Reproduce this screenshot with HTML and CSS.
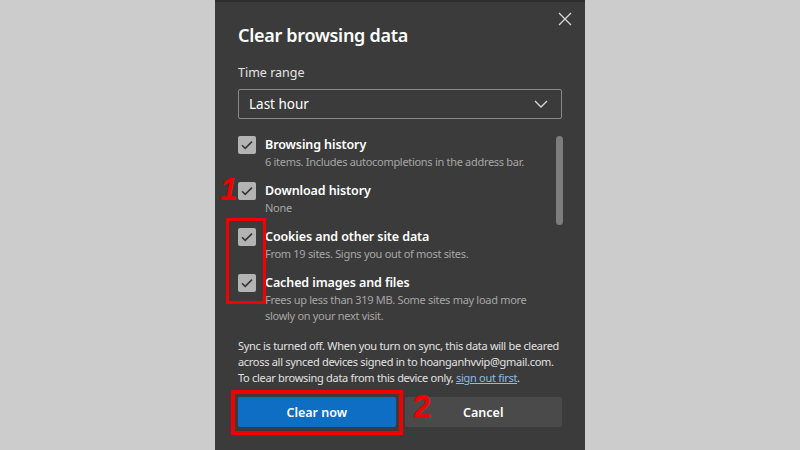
FILE: index.html
```html
<!DOCTYPE html>
<html>
<head>
<meta charset="utf-8">
<link rel="stylesheet" href="styles.css">
</head>
<body>
<div class="page">
  <div class="dialog">
    <button class="close" aria-label="Close">
      <svg width="14" height="14" viewBox="0 0 14 14"><path d="M1 1L13 13M13 1L1 13" stroke="#d8d8d8" stroke-width="1.3" fill="none"/></svg>
    </button>
    <h1 class="title">Clear browsing data</h1>
    <div class="label">Time range</div>
    <div class="select">
      <span>Last hour</span>
      <svg width="14" height="8" viewBox="0 0 14 8"><path d="M1 1L7 7L13 1" stroke="#d8d8d8" stroke-width="1.3" fill="none"/></svg>
    </div>
    <div class="listwrap">
      <div class="list">
        <div class="item">
          <span class="cb"><svg width="12" height="10" viewBox="0 0 12 10"><path d="M1 5.2L4.2 8.4L11 1.6" stroke="#333" stroke-width="1.5" fill="none"/></svg></span>
          <div class="txt"><div class="it">Browsing history</div><div class="sub">6 items. Includes autocompletions in the address bar.</div></div>
        </div>
        <div class="item">
          <span class="cb"><svg width="12" height="10" viewBox="0 0 12 10"><path d="M1 5.2L4.2 8.4L11 1.6" stroke="#333" stroke-width="1.5" fill="none"/></svg></span>
          <div class="txt"><div class="it">Download history</div><div class="sub">None</div></div>
        </div>
        <div class="item">
          <span class="cb"><svg width="12" height="10" viewBox="0 0 12 10"><path d="M1 5.2L4.2 8.4L11 1.6" stroke="#333" stroke-width="1.5" fill="none"/></svg></span>
          <div class="txt"><div class="it">Cookies and other site data</div><div class="sub">From 19 sites. Signs you out of most sites.</div></div>
        </div>
        <div class="item">
          <span class="cb"><svg width="12" height="10" viewBox="0 0 12 10"><path d="M1 5.2L4.2 8.4L11 1.6" stroke="#333" stroke-width="1.5" fill="none"/></svg></span>
          <div class="txt"><div class="it">Cached images and files</div><div class="sub">Frees up less than 319 MB. Some sites may load more<br>slowly on your next visit.</div></div>
        </div>
      </div>
      <div class="track"><div class="thumb"></div></div>
    </div>
    <p class="sync">Sync is turned off. When you turn on sync, this data will be cleared<br>across all synced devices signed in to hoanganhvvip@gmail.com.<br>To clear browsing data from this device only, <a class="link">sign out first</a>.</p>
    <div class="buttons">
      <button class="btn primary">Clear now</button>
      <button class="btn secondary">Cancel</button>
    </div>
    <div class="mark box1"></div>
    <div class="mark box2"></div>
    <div class="num n1">1</div>
    <div class="num n2">2</div>
  </div>
</div>
</body>
</html>
```
FILE: styles.css
```css
* { box-sizing: border-box; }
html, body { margin: 0; padding: 0; }
body {
  background: #cccccc;
  font-family: "Noto Sans", "Open Sans", sans-serif;
  width: 800px;
  height: 450px;
  overflow: hidden;
}
.page {
  width: 800px;
  height: 450px;
  padding-left: 215px;
}
.dialog {
  position: relative;
  width: 370px;
  height: 450px;
  background: #3b3b3b;
  border-top: 2px solid #2e2e2e;
  padding: 20px 23px 0 23px;
  color: #fff;
}
.close {
  position: absolute;
  top: 10px;
  right: 13px;
  width: 14px;
  height: 14px;
  padding: 0;
  border: 0;
  background: none;
  display: flex;
}
.title {
  margin: 0;
  font-size: 18px;
  font-weight: 600;
  line-height: 26px;
  letter-spacing: -0.3px;
}
.label {
  margin-top: 17px;
  font-size: 12.5px;
  line-height: 16px;
  color: #e4e4e4;
}
.select {
  margin-top: 8px;
  height: 30px;
  border: 1px solid #8a8a8a;
  border-radius: 2px;
  display: flex;
  align-items: center;
  justify-content: space-between;
  padding: 0 13px 0 10px;
  font-size: 13.5px;
}
.listwrap {
  margin-top: 17px;
  display: flex;
  justify-content: space-between;
}
.list { display: flex; flex-direction: column; gap: 12px; }
.item { display: flex; gap: 9px; align-items: flex-start; }
.cb {
  width: 18px;
  height: 18px;
  background: #b3b3b3;
  border-radius: 2px;
  display: flex;
  align-items: center;
  justify-content: center;
  flex: none;
}
.it {
  font-size: 12.5px;
  font-weight: 600;
  line-height: 18px;
  letter-spacing: -0.1px;
}
.sub {
  font-size: 11px;
  line-height: 16px;
  letter-spacing: -0.3px;
  color: #a6a6a6;
}
.track {
  width: 7px;
  margin-right: -1px;
}
.thumb {
  width: 7px;
  height: 89px;
  border-radius: 4px;
  background: #7d7d7d;
}
.sync {
  margin: 14px 0 0 0;
  font-size: 11px;
  line-height: 16px;
  letter-spacing: -0.3px;
  white-space: nowrap;
  color: #e2e2e2;
}
.link { color: #8fbbe6; text-decoration: underline; }
.buttons {
  margin-top: 11px;
  display: flex;
  gap: 9px;
}
.btn {
  flex: 1;
  height: 30px;
  border: 0;
  border-radius: 2px;
  color: #fff;
  font-family: inherit;
  font-size: 12.5px;
  font-weight: 600;
}
.primary { background: #0d6ec3; }
.secondary { background: #4a4a4a; }
.mark {
  position: absolute;
  border: 3px solid #f00000;
}
.box1 { left: 11px; top: 216px; width: 40px; height: 86px; }
.box2 { left: 16px; top: 388px; width: 172px; height: 45px; border-width: 4px; }
.num {
  position: absolute;
  color: #f00000;
  font-family: "Liberation Sans", sans-serif;
  font-weight: 700;
  line-height: 1;
}
.n1 { left: 5px; top: 172px; font-size: 31px; font-style: italic; }
.n2 { left: 198px; top: 388px; font-size: 33px; }
```
